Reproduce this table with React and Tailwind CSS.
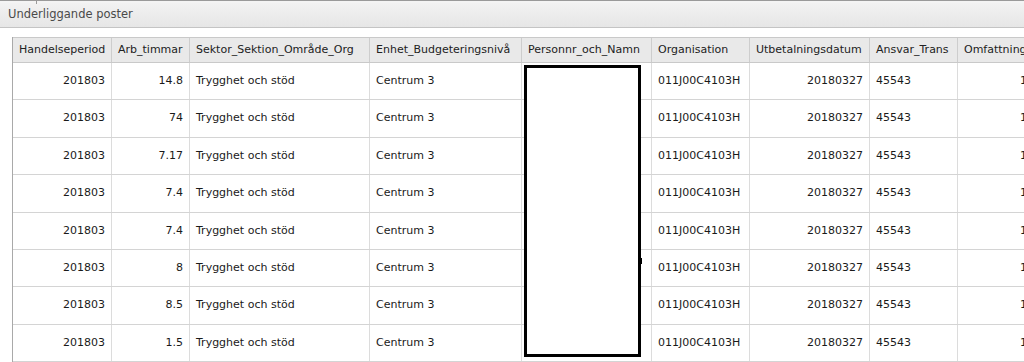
import React from "react";

const COLUMNS = [
  { key: "period", label: "Handelseperiod", width: "w-[99px]", align: "text-right" },
  { key: "hours", label: "Arb_timmar", width: "w-[78px]", align: "text-right" },
  { key: "sektor", label: "Sektor_Sektion_Område_Org", width: "w-[180px]", align: "text-left" },
  { key: "enhet", label: "Enhet_Budgeteringsnivå", width: "w-[152px]", align: "text-left" },
  { key: "person", label: "Personnr_och_Namn", width: "w-[130px]", align: "text-left" },
  { key: "org", label: "Organisation", width: "w-[98px]", align: "text-left" },
  { key: "datum", label: "Utbetalningsdatum", width: "w-[120px]", align: "text-right" },
  { key: "ansvar", label: "Ansvar_Trans", width: "w-[88px]", align: "text-left" },
  { key: "omf", label: "Omfattning", width: "w-[76px]", align: "text-right" },
];

const HOURS = ["14.8", "74", "7.17", "7.4", "7.4", "8", "8.5", "1.5"];

const ROWS = HOURS.map((h) => ({
  period: "201803",
  hours: h,
  sektor: "Trygghet och stöd",
  enhet: "Centrum 3",
  person: "",
  org: "011J00C4103H",
  datum: "20180327",
  ansvar: "45543",
  omf: "1",
}));

export default function App() {
  return (
    <div className="w-[1024px] h-[362px] overflow-hidden bg-white font-['DejaVu_Sans',sans-serif] text-[11px] text-[#1a1a1a]">
      {/* window edge */}
      <div className="relative h-[3px] bg-[#f4f4f4] border-t border-[#9a9a9a]">
        <div className="absolute left-[36px] top-0 h-[3px] w-px bg-[#9a9a9a]" />
      </div>

      {/* panel title */}
      <div className="h-[25px] flex items-center px-[8px] bg-gradient-to-b from-[#f2f2f2] to-[#e6e6e6] border-b border-[#c4c4c4] text-[#4a4a4a] text-[11.5px]">
        Underliggande poster
      </div>

      <div className="h-[9px]" />

      {/* grid */}
      <div className="relative pl-[12px]">
        <div className="border-l border-[#a9a9a9] w-max">
          <div className="flex h-[26px] bg-[#e9e9e9] border-y border-[#c9c9c9]">
            {COLUMNS.map((c) => (
              <div
                key={c.key}
                className={`${c.width} shrink-0 flex items-center px-[6px] border-r border-[#cdcdcd] whitespace-nowrap overflow-hidden text-[#222]`}
              >
                {c.label}
              </div>
            ))}
          </div>

          {ROWS.map((r, i) => (
            <div key={i} className="flex h-[37.4px] border-b border-[#d4d4d4]">
              {COLUMNS.map((c) => (
                <div
                  key={c.key}
                  className={`${c.width} ${c.align} shrink-0 flex items-center px-[6px] border-r border-[#dcdcdc] whitespace-nowrap overflow-hidden`}
                >
                  <span className="w-full">{r[c.key]}</span>
                </div>
              ))}
            </div>
          ))}
        </div>

        {/* redaction box */}
        <div className="absolute left-[524px] top-[28px] w-[117px] h-[292px] border-[3px] border-black bg-white" />
        <div className="absolute left-[640px] top-[221px] w-[2px] h-[6px] bg-black" />
      </div>
    </div>
  );
}
